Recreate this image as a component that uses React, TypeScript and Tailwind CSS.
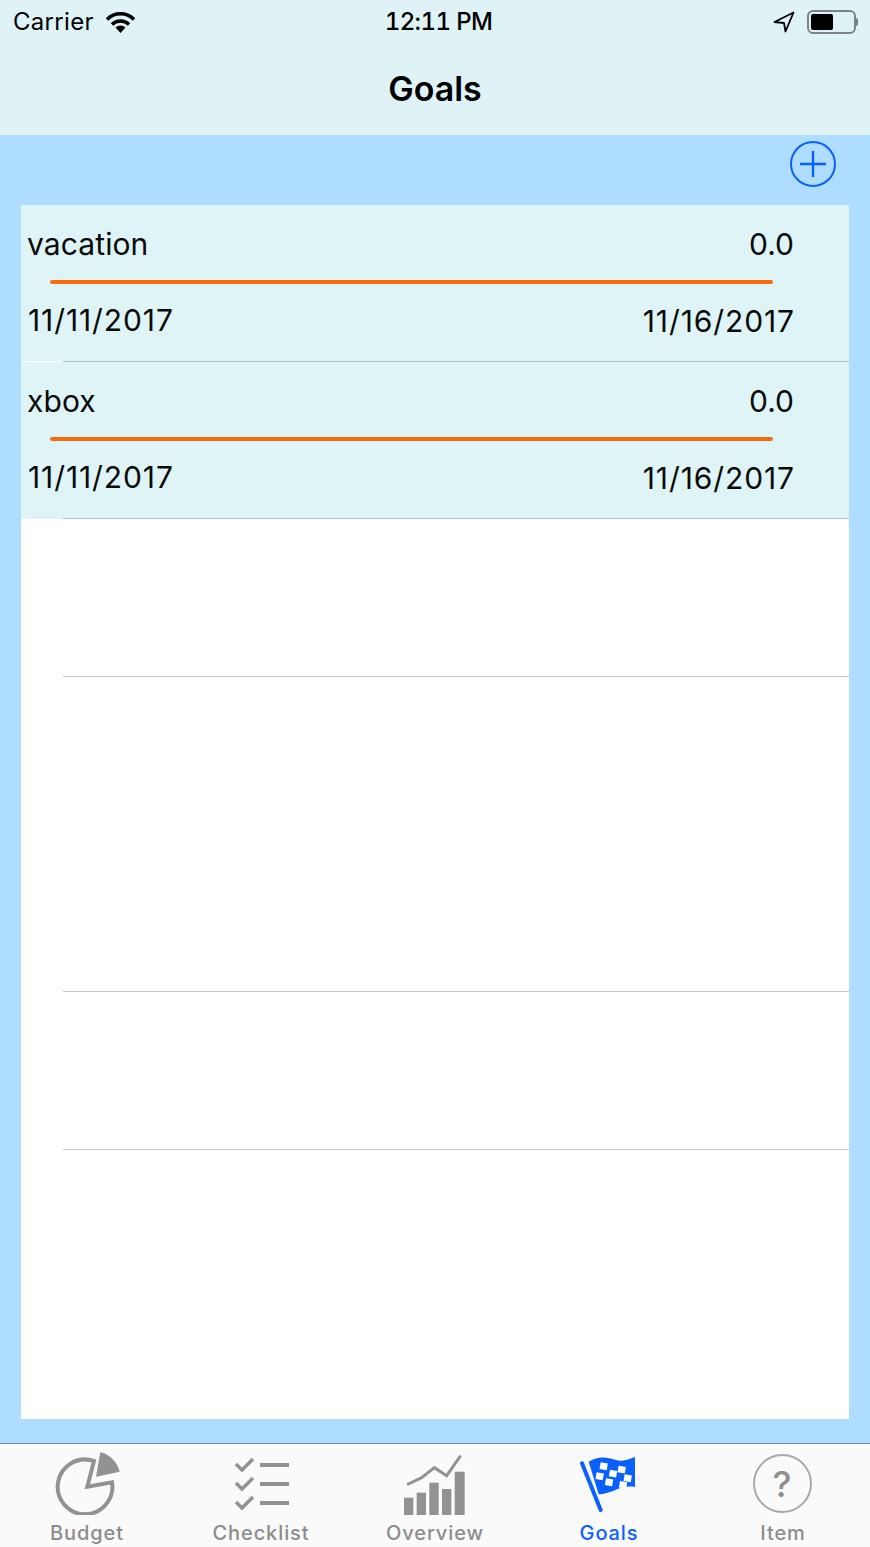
const font = "font-['Inter','Liberation_Sans',sans-serif]";

function GoalRow({ name, divider }: { name: string; divider: string }) {
  return (
    <div className="bg-[#def4f7] h-[157px] flex flex-col text-[30px] leading-[40px] text-[#0a0a0a]">
      <div className="mt-[19px] flex justify-between pl-[7px] pr-[55px]">
        <span className="-ml-[1px] tracking-[0.1px]">{name}</span>
        <span>0.0</span>
      </div>
      <div className="mt-[16px] ml-[29px] w-[723px] h-[4px] rounded-full bg-[#f96a08]" />
      <div className="mt-[16px] flex justify-between pl-[7px] pr-[54px] tracking-[0.9px]">
        <span>11/11/2017</span>
        <span className="mt-[1px]">11/16/2017</span>
      </div>
      <div className="mt-auto flex h-px">
        <div className={`w-[42px] ${divider}`} />
        <div className="flex-1 bg-[#b9bec2]" />
      </div>
    </div>
  );
}

function EmptyRow({ line = true, h }: { line?: boolean; h: string }) {
  return (
    <div className={`${h} flex flex-col justify-end`}>
      {line && <div className="ml-[42px] h-px bg-[#c4c6c8]" />}
    </div>
  );
}

function BudgetIcon() {
  return (
    <svg width="110" height="70" viewBox="0 0 330 210" className="blur-[0.5px]">
      <path d="M186 48 A 82 82 0 1 0 240 112 L 166 125 Z" fill="none" stroke="#929292" strokeWidth="12" />
      <path d="M205 22 A 78 78 0 0 1 263 80 L 192 95 Z" fill="#929292" />
    </svg>
  );
}

function ChecklistIcon() {
  return (
    <svg width="70" height="60" viewBox="0 0 70 60" className="blur-[0.4px] mt-[10px]">
      {[0, 19, 38].map((y) => (
        <g key={y}>
          <path d={`M10 ${9 + y} L16 ${15 + y} L27 ${4 + y}`} fill="none" stroke="#929292" strokeWidth="3.5" />
          <rect x="34" y={8 + y} width="29" height="4" fill="#929292" />
        </g>
      ))}
    </svg>
  );
}

function OverviewIcon() {
  return (
    <svg width="110" height="70" viewBox="0 0 330 210" className="blur-[0.5px]">
      <rect x="72" y="158" width="28" height="52" fill="#929292" />
      <rect x="110" y="143" width="28" height="67" fill="#929292" />
      <rect x="148" y="113" width="28" height="97" fill="#929292" />
      <rect x="186" y="132" width="28" height="78" fill="#929292" />
      <rect x="224" y="80" width="30" height="130" fill="#929292" />
      <path d="M85 117 L125 98 L163 68 L200 92 L240 35" fill="none" stroke="#929292" strokeWidth="9" strokeLinecap="round" />
    </svg>
  );
}

function FlagIcon() {
  const squares = [
    [122, 52], [176, 62], [110, 82], [150, 74], [194, 88],
    [138, 100], [180, 108],
  ];
  return (
    <svg width="100" height="70" viewBox="0 0 300 210" className="blur-[0.6px] ml-[2px]">
      <path d="M66 55 L122 195" stroke="#0a60fe" strokeWidth="12" strokeLinecap="round" />
      <path
        d="M86 50 C115 32 140 36 165 44 C190 52 205 42 225 36 L225 126 C200 122 180 128 165 136 C150 142 130 148 116 148 Z"
        fill="#0a60fe"
      />
      {squares.map(([x, y]) => (
        <rect key={`${x}-${y}`} x={x} y={y} width="22" height="20" fill="#ffffff" transform={`rotate(10 ${x} ${y})`} />
      ))}
    </svg>
  );
}

function ItemIcon() {
  return (
    <div className="w-[59px] h-[59px] mt-[9px] -ml-[2px] rounded-full border-2 border-[#a8a8a8] flex items-center justify-center text-[#8f8f8f] text-[36px] leading-none font-medium">
      ?
    </div>
  );
}

function Tab({ label, active, children }: { label: string; active?: boolean; children: React.ReactNode }) {
  return (
    <div className="flex-1 flex flex-col items-center">
      <div className="h-[70px] flex items-start justify-center">{children}</div>
      <span className={`mt-[6px] text-[20px] leading-[24px] font-medium tracking-[0.9px] ${active ? "text-[#0a60fe]" : "text-[#8c8c8c]"}`}>
        {label}
      </span>
    </div>
  );
}

export default function App() {
  return (
    <div className={`w-[870px] h-[1547px] flex flex-col bg-[#aeddff] overflow-hidden ${font}`}>
      {/* status bar + nav */}
      <div className="h-[135px] shrink-0 bg-[#dff3f7] flex flex-col">
        <div className="h-[44px] flex items-center px-[13px] text-black text-[24px]">
          <div className="flex-1 flex items-center gap-[12px]">
            <span className="tracking-[0.3px]">Carrier</span>
            <svg width="29" height="21" viewBox="0 0 29 21">
              <path d="M1 7.5 A19 19 0 0 1 28 7.5" fill="none" stroke="#000" strokeWidth="3.5" />
              <path d="M6 12.5 A12 12 0 0 1 23 12.5" fill="none" stroke="#000" strokeWidth="3.5" />
              <path d="M9.5 15.5 A7 7 0 0 1 19.5 15.5 L14.5 21 Z" fill="#000" />
            </svg>
          </div>
          <span className="ml-[6px] font-medium tabular-nums tracking-[-0.6px]">12:11 PM</span>
          <div className="flex-1 flex items-center justify-end gap-[12px] -mr-[1px]">
            <svg width="22" height="22" viewBox="0 0 22 22">
              <path d="M20.5 1.5 L1.5 11 L11 12 L12.5 20.5 Z" fill="none" stroke="#000" strokeWidth="1.8" strokeLinejoin="round" />
            </svg>
            <div className="flex items-center">
              <div className="w-[49px] h-[24px] rounded-[6px] border-2 border-[#7d8285] p-[2px]">
                <div className="w-[22px] h-full rounded-[2px] bg-black" />
              </div>
              <div className="w-[2px] h-[8px] rounded-r bg-[#7d8285]" />
            </div>
          </div>
        </div>
        <div className="flex-1 flex items-center justify-center pb-[3px] text-[34px] font-semibold text-black">Goals</div>
      </div>

      {/* add button */}
      <div className="h-[70px] shrink-0 flex justify-end pt-[6px] pr-[34px]">
        <div className="w-[46px] h-[46px] rounded-full border-2 border-[#0a60fe] flex items-center justify-center">
          <svg width="26" height="26" viewBox="0 0 26 26">
            <path d="M13 0 V26 M0 13 H26" stroke="#0a60fe" strokeWidth="2.4" />
          </svg>
        </div>
      </div>

      {/* goals table */}
      <div className="mx-[21px] h-[1214px] shrink-0 bg-white flex flex-col">
        <GoalRow name="vacation" divider="bg-white" />
        <GoalRow name="xbox" divider="bg-[#def4f7]" />
        <EmptyRow h="h-[158px]" />
        <EmptyRow h="h-[157px]" line={false} />
        <EmptyRow h="h-[158px]" />
        <EmptyRow h="h-[158px]" />
      </div>

      {/* tab bar */}
      <div className="mt-[24px] h-[104px] shrink-0 bg-[#fafafa] border-t border-[#6f93ad] flex pt-[1px]">
        <Tab label="Budget"><BudgetIcon /></Tab>
        <Tab label="Checklist"><ChecklistIcon /></Tab>
        <Tab label="Overview"><OverviewIcon /></Tab>
        <Tab label="Goals" active><FlagIcon /></Tab>
        <Tab label="Item"><ItemIcon /></Tab>
      </div>
    </div>
  );
}
